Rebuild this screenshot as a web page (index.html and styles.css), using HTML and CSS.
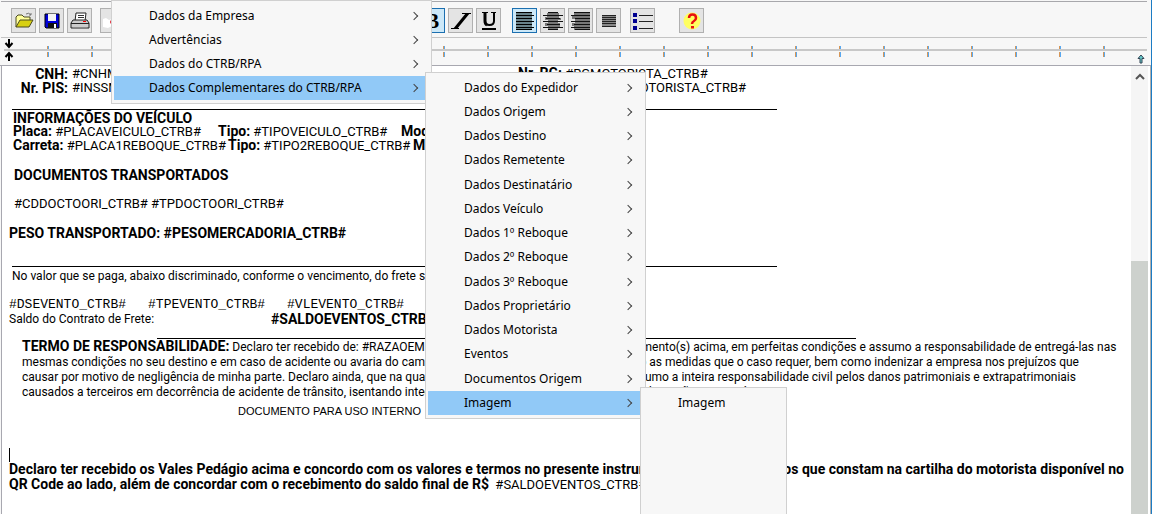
FILE: index.html
```html
<!DOCTYPE html>
<html lang="pt-BR">
<head>
<meta charset="utf-8">
<title>Editor CTRB/RPA</title>
<link rel="stylesheet" href="styles.css">
</head>
<body>
<div class="window">
  <header class="toolbar">
    <div class="group">
      <button class="tool" type="button" aria-label="Abrir"><svg viewBox="0 0 22 22" width="22" height="22"><path d="M3 17V7l2-2h4l2 2h6v3" fill="#ffff9a" stroke="#4a4a20"/><path d="M3 17l4-7h13l-4 7z" fill="#d8d010" stroke="#4a4a20"/><path d="M13 4q3-2 5 1m0-2v2h-2" fill="none" stroke="#777"/></svg></button>
      <button class="tool" type="button" aria-label="Salvar"><svg viewBox="0 0 22 22" width="22" height="22"><path d="M4 4h14v14H5l-1-1z" fill="#0000d8" stroke="#000"/><path d="M7 4h8v7H7z" fill="#f4f4f4"/><path d="M7 13h9v5H7z" fill="#111"/><path d="M13 14h2v4h-2z" fill="#fff"/></svg></button>
      <button class="tool" type="button" aria-label="Imprimir"><svg viewBox="0 0 22 22" width="22" height="22"><path d="M6 11L7 3h10l-1 8z" fill="#fff" stroke="#222"/><path d="M9 5.500h6M9 7.500h6" stroke="#333"/><path d="M4 10h14l2 3v5H2v-5z" fill="#ccc" stroke="#222"/><path d="M2 13.500h18" stroke="#222"/><path d="M4 17.500h14" stroke="#888"/><path d="M14 11.500h3" stroke="#f00"/></svg></button>
    </div>
    <div class="group group-cut">
      <button class="tool" type="button" aria-label="Recortar"><svg viewBox="0 0 22 22" width="22" height="22"><path d="M1 9l3-1 3 2 3-1v7l-4 2-5-1z" fill="#fff"/><circle cx="10" cy="12" r="2" fill="#e02030"/></svg></button>
    </div>
    <div class="group group-style">
      <button class="tool on" type="button" aria-label="Negrito"><span class="glyph">B</span></button>
      <button class="tool" type="button" aria-label="Itálico"><svg viewBox="0 0 22 22" width="22" height="22"><path d="M12 3.500h9M1 18.500h8" stroke="#000"/><path d="M16 3h4L7 19H3z"/></svg></button>
      <button class="tool" type="button" aria-label="Sublinhado"><svg viewBox="0 0 22 22" width="22" height="22"><path d="M4 2.500h6M13 2.500h5" stroke="#000"/><path d="M7 2v9q0 4 4.500 4t4.500-4V2" fill="none" stroke="#000" stroke-width="2"/><path d="M7 2v9q0 3 2 4" fill="none" stroke="#000" stroke-width="3"/><path d="M4 19h14" stroke="#000" stroke-width="2"/></svg></button>
    </div>
    <div class="group group-align">
      <button class="tool on" type="button" aria-label="Alinhar à esquerda"><svg viewBox="0 0 22 22" width="22" height="22"><path d="M2 3h16v17H2z" fill="#69828a"/><path d="M2 2.500h16M2 5.500h18M2 8.500h16M2 11.500h18M2 14.500h16M2 17.500h18M2 19.500h16" stroke="#000"/></svg></button>
      <button class="tool" type="button" aria-label="Centralizar"><svg viewBox="0 0 22 22" width="22" height="22"><path d="M5 3h12v5h2v2h-3v3h2v4h-2v3H6v-4H3v-3h3v-3H3V7h2z" fill="#777"/><path d="M6 2.500h10M1 5.500h20M4 8.500h14M1 11.500h20M5 14.500h13M1 17.500h20M6 19.500h10" stroke="#111"/></svg></button>
      <button class="tool" type="button" aria-label="Alinhar à direita"><svg viewBox="0 0 22 22" width="22" height="22"><path d="M4 3h16v17H4v-4H2v-3h3V9H2V6h2z" fill="#777"/><path d="M4 2.500h16M1 5.500h19M5 8.500h15M1 11.500h19M4 14.500h16M1 17.500h19M5 19.500h15" stroke="#111"/></svg></button>
      <button class="tool" type="button" aria-label="Justificar"><svg viewBox="0 0 22 22" width="22" height="22"><path d="M4 5h14v12H4z" fill="#888"/><path d="M4 5.500h14M4 7.500h14M4 9.500h14M4 11.500h14M4 13.500h14M4 16.500h14" stroke="#222"/></svg></button>
    </div>
    <div class="group group-list">
      <button class="tool" type="button" aria-label="Marcadores"><svg viewBox="0 0 22 22" width="22" height="22"><path d="M1 3h4v4H1zM1 9h4v4H1zM1 16h4v4H1z" fill="#000090"/><path d="M7 5.500h14M7 11.500h14M7 18.500h14" stroke="#222"/></svg></button>
    </div>
    <div class="group group-help">
      <button class="tool" type="button" aria-label="Ajuda"><svg viewBox="0 0 22 22" width="22" height="22"><circle cx="11" cy="11" r="8.500" fill="#ffff60"/><path d="M8 8q0-3.500 3.500-3.500T15 8q0 2-2 3t-2 3" fill="none" stroke="#e81010" stroke-width="2.500"/><path d="M10 16h3v2.500h-3z" fill="#e81010"/></svg></button>
    </div>
  </header>

  <div class="ruler">
    <div class="ticks"></div>
    <div class="axis"></div>
    <div class="ticks low"></div>
    <svg class="indent" viewBox="0 0 10 24" width="10" height="24"><path d="M5 1v8M1.500 5L5 9l3.500-4M5 23v-8M1.500 19L5 15l3.500 4" fill="none" stroke="#000" stroke-width="2"/></svg>
    <svg class="margin" viewBox="0 0 8 10" width="8" height="10"><path d="M4 1L1 4.500h2V9h2V4.500h2z" fill="#6cc" stroke="#345"/></svg>
  </div>

  <div class="editor">
    <main class="page">
      <div class="ids">
        <b class="key">CNH:</b><span>#CNHMOT</span><span><b>Nr. RG:</b> #RGMOTORISTA_CTRB#</span>
        <b class="key">Nr. PIS:</b><span>#INSSMOT</span><span class="right">#ORGMOTORISTA_CTRB#</span>
      </div>
      <hr class="rule first">
      <section class="vehicle">
        <h2>INFORMAÇÕES DO VEÍCULO</h2>
        <p class="fields"><span><b>Placa:</b> #PLACAVEICULO_CTRB#</span><span><b>Tipo:</b> #TIPOVEICULO_CTRB#</span><span><b>Modelo:</b></span></p>
        <p class="fields second-row"><span><b>Carreta:</b> #PLACA1REBOQUE_CTRB#</span><span><b>Tipo:</b> #TIPO2REBOQUE_CTRB#</span><span><b>Modelo:</b></span></p>
      </section>
      <section class="block"><h2>DOCUMENTOS TRANSPORTADOS</h2></section>
      <p class="block">#CDDOCTOORI_CTRB# #TPDOCTOORI_CTRB#</p>
      <h2 class="block weight">PESO TRANSPORTADO: #PESOMERCADORIA_CTRB#</h2>
      <hr class="rule second">
      <p class="small value">No valor que se paga, abaixo discriminado, conforme o vencimento, do frete supra</p>
      <p class="events"><span>#DSEVENTO_CTRB#</span><span>#TPEVENTO_CTRB#</span><span>#VLEVENTO_CTRB#</span></p>
      <p class="balance"><span class="small">Saldo do Contrato de Frete:</span><b>#SALDOEVENTOS_CTRB#</b></p>
      <hr class="rule third">
      <section class="term small">
        <p><span><b>TERMO DE RESPONSABILIDADE:</b> Declaro ter recebido de: #RAZAOEMP</span><span>ecimento(s) acima, em perfeitas condições e assumo a responsabilidade de entregá-las nas</span></p>
        <p><span>mesmas condições no seu destino e em caso de acidente ou avaria do caminhão</span><span>ndo as medidas que o caso requer, bem como indenizar a empresa nos prejuízos que</span></p>
        <p><span>causar por motivo de negligência de minha parte. Declaro ainda, que na qualidade</span><span>assumo a inteira responsabilidade civil pelos danos patrimoniais e extrapatrimoniais</span></p>
        <p><span>causados a terceiros em decorrência de acidente de trânsito, isentando integral</span><span>de obrigações securitárias.</span></p>
      </section>
      <p class="internal">DOCUMENTO PARA USO INTERNO</p>
      <div class="caret"></div>
      <section class="closing">
        <p><b>Declaro ter recebido os Vales Pedágio acima e concordo com os valores e termos no presente instrumento</b><b>os que constam na cartilha do motorista disponível no</b></p>
        <p><span><b>QR Code ao lado, além de concordar com o recebimento do saldo final de R$</b>&nbsp; #SALDOEVENTOS_CTRB#</span></p>
      </section>
    </main>
    <div class="scroll">
      <button type="button" class="up" aria-label="Rolar para cima"><svg viewBox="0 0 10 8" width="10" height="8"><path d="M1 6l4-4 4 4" fill="none" stroke="#555" stroke-width="2"/></svg></button>
      <div class="thumb"></div>
    </div>
  </div>

  <ul class="menu main-menu">
    <li><button type="button">Dados da Empresa</button></li>
    <li><button type="button">Advertências</button></li>
    <li><button type="button">Dados do CTRB/RPA</button></li>
    <li><button type="button" class="active">Dados Complementares do CTRB/RPA</button></li>
  </ul>
  <ul class="menu sub-menu">
    <li><button type="button">Dados do Expedidor</button></li>
    <li><button type="button">Dados Origem</button></li>
    <li><button type="button">Dados Destino</button></li>
    <li><button type="button">Dados Remetente</button></li>
    <li><button type="button">Dados Destinatário</button></li>
    <li><button type="button">Dados Veículo</button></li>
    <li><button type="button">Dados 1º Reboque</button></li>
    <li><button type="button">Dados 2º Reboque</button></li>
    <li><button type="button">Dados 3º Reboque</button></li>
    <li><button type="button">Dados Proprietário</button></li>
    <li><button type="button">Dados Motorista</button></li>
    <li><button type="button">Eventos</button></li>
    <li><button type="button">Documentos Origem</button></li>
    <li><button type="button" class="active">Imagem</button></li>
  </ul>
  <ul class="menu leaf-menu">
    <li><button type="button">Imagem</button></li>
  </ul>
</div>
</body>
</html>
```

FILE: styles.css
```css
* { box-sizing: border-box; }
body { margin: 0; overflow: hidden; background: #f7f7f7; }
h2, p, ul { margin: 0; padding: 0; }
button { font: inherit; color: inherit; padding: 0; margin: 0; border: 0; background: none; }

.window {
  position: relative;
  display: flex;
  flex-direction: column;
  height: 100vh;
  overflow: hidden;
  border-right: 1px solid #1c7cc4;
  font: 13px/14px Roboto, "Liberation Sans", sans-serif;
  color: #000;
}

/* toolbar */
.toolbar {
  display: flex;
  margin: 1px 4px 0 1px;
  padding: 6px 0 4px 10px;
  border-top: 1px solid #a8a8ac;
  border-bottom: 1px solid #c4c4c4;
}
.group { display: flex; gap: 3px; }
.group-cut { margin-left: 8px; }
.group-style { margin-left: 295px; }
.group-align { margin-left: 11px; }
.group-list { margin-left: 9px; }
.group-help { margin-left: 24px; }
.tool {
  display: grid;
  place-items: center;
  width: 25px;
  height: 25px;
  border: 1px solid #b0b0b0;
  background: #e4e4e4;
}
.tool.on { border-color: #1b6fb0; background: #cce8f8; }
.glyph { font: bold 20px/22px "Liberation Serif", serif; }

/* ruler */
.ruler { position: relative; padding: 8px 4px 8px 4px; border-bottom: 1px solid #a8a8b0; }
.ticks {
  height: 3px;
  background: linear-gradient(90deg, #d89858 1px, #58a8f0 1px 2px, transparent 2px) 0 0 / 44px 100%;
  margin-left: 43px;
}
.ticks.low { height: 5px; margin-top: 1px; }
.axis { height: 2px; background: #c8c8c8; }
.indent { position: absolute; left: 4px; top: 0; }
.margin { position: absolute; right: 6px; bottom: 1px; }

/* document */
.editor {
  flex: 1;
  min-height: 0;
  display: flex;
  margin-left: 1px;
  padding-right: 2px;
  border-left: 1px solid #a8a8b0;
  border-right: 1px solid #b0b0b0;
  background: #fff;
}
.page { flex: 1; min-width: 0; padding: 1px 0 0 7px; overflow: hidden; white-space: nowrap; }
.ids { display: grid; grid-template-columns: 59px 442px 228px; column-gap: 4px; width: max-content; }
.key, .right { text-align: right; }
h2, b { font-size: 14px; font-weight: 700; }
h2 { line-height: 14px; }
b { line-height: 0; }
.key, .balance > b { line-height: 14px; }
.closing p > b { line-height: 15px; }
.rule { height: 1px; margin: 0; border: 0; background: #000; }
.rule.first, .rule.second { width: 765px; margin-left: 3px; }
.rule.first { margin-top: 14px; margin-bottom: 1px; }
.rule.second { margin-top: 26px; }
.rule.third { width: 699px; margin: 12px 0 1px 148px; }
.vehicle { padding-left: 4px; }
.fields { display: grid; grid-template-columns: 205px 183px auto; }
.second-row { grid-template-columns: 215px 185px auto; }
.block { margin-top: 15px; padding-left: 5px; }
.block.weight { padding-left: 0; }
.small { font-size: 12px; }
.value { padding: 2px 0 0 3px; }
.events { display: flex; gap: 22px; margin-top: 15px; font: 13px/14px "Liberation Mono", monospace; }
.balance { display: grid; grid-template-columns: 262px auto; line-height: 14px; }
.term { padding-left: 13px; line-height: 15px; }
.term p { display: grid; grid-template-columns: 604px auto; }
.term p > span { min-width: 0; }
.internal { margin-top: 4px; padding-left: 229px; font: 11px/14px "Liberation Sans", sans-serif; }
.caret { width: 1px; height: 14px; margin-top: 30px; background: #000; }
.closing { line-height: 15px; padding-right: 7px; }
.closing p { display: flex; justify-content: space-between; }

.scroll { display: flex; flex-direction: column; width: 17px; background: #f5f5f5; }
.up { display: grid; place-items: center; height: 22px; }
.thumb { flex: 1; margin-top: 173px; background: #cdd1cd; }

/* cascading menus */
.menu {
  position: absolute;
  padding: 3px 2px;
  list-style: none;
  border: 1px solid #d0d0d0;
  background: #f7f7f7;
  font: 12px/24px "Noto Sans", "Open Sans", sans-serif;
}
.menu li:nth-child(4n+5) { margin-top: 1px; }
.menu button {
  display: flex;
  align-items: center;
  justify-content: space-between;
  width: 100%;
  height: 24px;
  padding: 0 12px 0 35px;
  text-align: left;
}
.menu button::after {
  content: "";
  width: 5px;
  height: 5px;
  border: solid #444;
  border-width: 1px 1px 0 0;
  transform: rotate(45deg);
}
.menu .active { background: #91c9f7; }
.main-menu { left: 111px; top: 0; width: 321px; }
.sub-menu { left: 425px; top: 72px; width: 221px; }
.sub-menu button { padding-left: 36px; }
.leaf-menu { left: 640px; top: 387px; bottom: -8px; width: 147px; }
.leaf-menu button::after { display: none; }
```
